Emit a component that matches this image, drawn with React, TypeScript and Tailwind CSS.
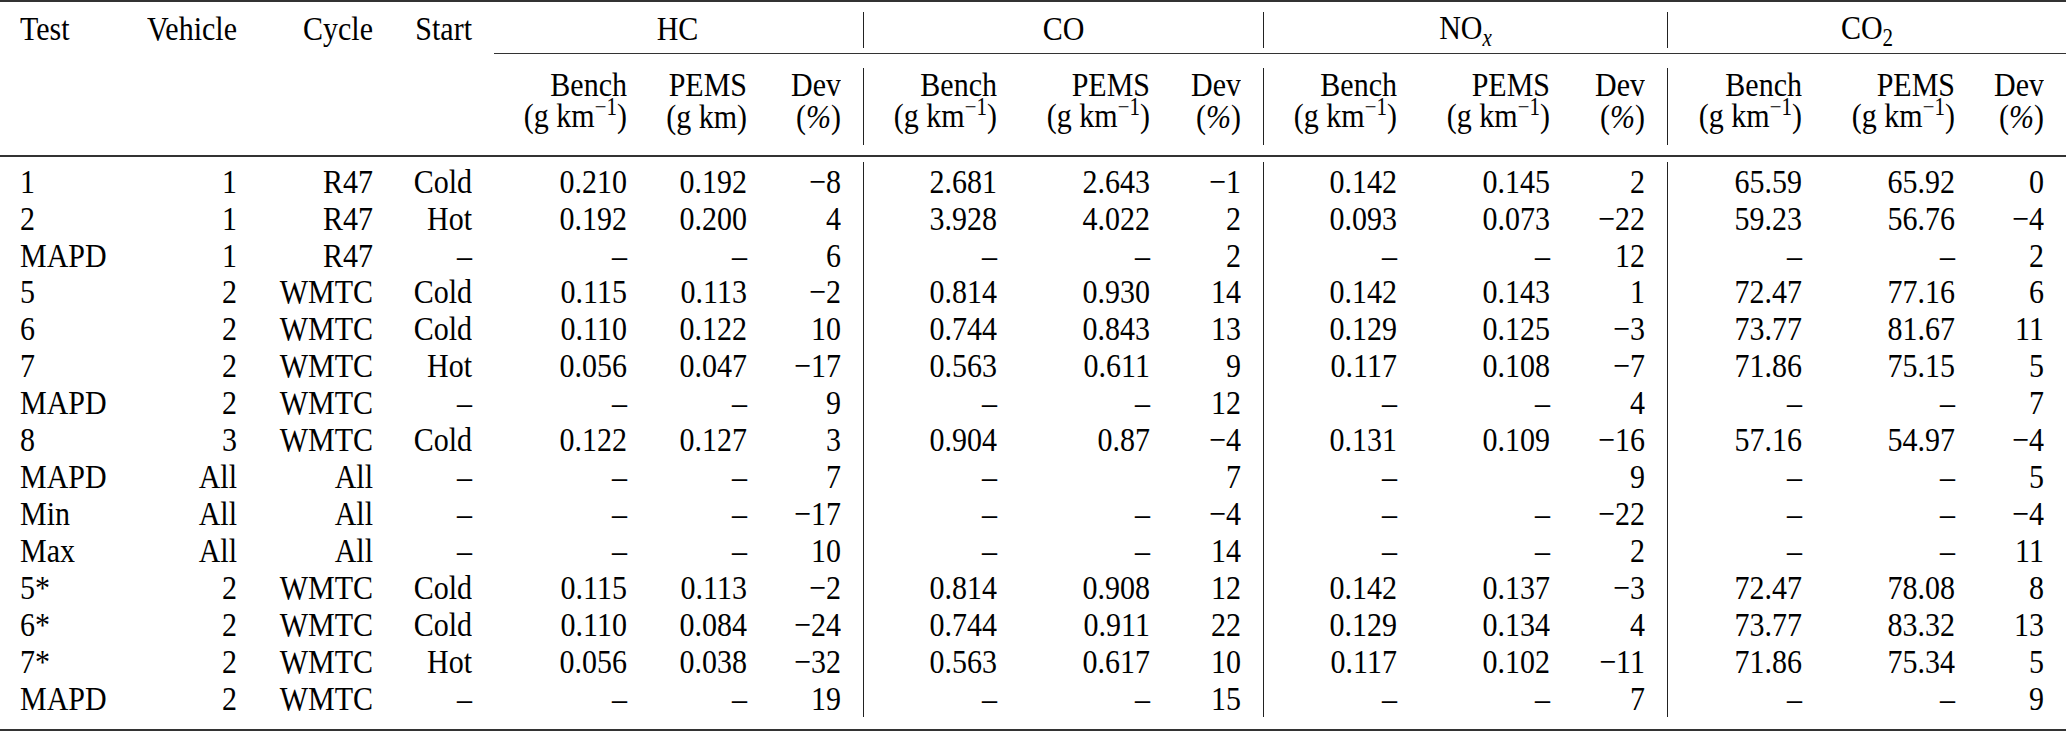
import React from "react";

const COLS =
  "grid grid-cols-[100px_157px_136px_99px_155px_120px_96px_154px_153px_93px_154px_153px_97px_155px_153px_91px]";

const M = "\u2212";
const D = "\u2013";

const rows: string[][] = [
  ["1", "1", "R47", "Cold", "0.210", "0.192", M + "8", "2.681", "2.643", M + "1", "0.142", "0.145", "2", "65.59", "65.92", "0"],
  ["2", "1", "R47", "Hot", "0.192", "0.200", "4", "3.928", "4.022", "2", "0.093", "0.073", M + "22", "59.23", "56.76", M + "4"],
  ["MAPD", "1", "R47", D, D, D, "6", D, D, "2", D, D, "12", D, D, "2"],
  ["5", "2", "WMTC", "Cold", "0.115", "0.113", M + "2", "0.814", "0.930", "14", "0.142", "0.143", "1", "72.47", "77.16", "6"],
  ["6", "2", "WMTC", "Cold", "0.110", "0.122", "10", "0.744", "0.843", "13", "0.129", "0.125", M + "3", "73.77", "81.67", "11"],
  ["7", "2", "WMTC", "Hot", "0.056", "0.047", M + "17", "0.563", "0.611", "9", "0.117", "0.108", M + "7", "71.86", "75.15", "5"],
  ["MAPD", "2", "WMTC", D, D, D, "9", D, D, "12", D, D, "4", D, D, "7"],
  ["8", "3", "WMTC", "Cold", "0.122", "0.127", "3", "0.904", "0.87", M + "4", "0.131", "0.109", M + "16", "57.16", "54.97", M + "4"],
  ["MAPD", "All", "All", D, D, D, "7", D, "", "7", D, "", "9", D, D, "5"],
  ["Min", "All", "All", D, D, D, M + "17", D, D, M + "4", D, D, M + "22", D, D, M + "4"],
  ["Max", "All", "All", D, D, D, "10", D, D, "14", D, D, "2", D, D, "11"],
  ["5*", "2", "WMTC", "Cold", "0.115", "0.113", M + "2", "0.814", "0.908", "12", "0.142", "0.137", M + "3", "72.47", "78.08", "8"],
  ["6*", "2", "WMTC", "Cold", "0.110", "0.084", M + "24", "0.744", "0.911", "22", "0.129", "0.134", "4", "73.77", "83.32", "13"],
  ["7*", "2", "WMTC", "Hot", "0.056", "0.038", M + "32", "0.563", "0.617", "10", "0.117", "0.102", M + "11", "71.86", "75.34", "5"],
  ["MAPD", "2", "WMTC", D, D, D, "19", D, D, "15", D, D, "7", D, D, "9"],
];

function cellClass(idx: number) {
  const left = idx === 0;
  const dev = idx >= 4 && (idx - 4) % 3 === 2;
  const vline = idx === 7 || idx === 10 || idx === 13;
  return [
    "whitespace-nowrap",
    left ? "pl-[20px] text-left" : "text-right",
    dev ? "pr-[22px]" : left ? "" : "pr-[20px]",
    vline ? "border-l border-[#222]" : "",
  ].join(" ");
}

function T({ children }: { children: React.ReactNode }) {
  return <span className="inline-block scale-y-115 leading-[26px]">{children}</span>;
}

function Unit() {
  return (
    <T>
      (g km
      <span className="relative -top-[11px] text-[21px]">{M}1</span>)
    </T>
  );
}

function Pct() {
  return (
    <T>
      (<span className="italic">%</span>)
    </T>
  );
}

export default function App() {
  const sub: [string, React.ReactNode][] = [];
  for (let g = 0; g < 4; g++) {
    sub.push(["Bench", <Unit key="u" />]);
    sub.push(["PEMS", g === 0 ? <T key="t">(g km)</T> : <Unit key="u2" />]);
    sub.push(["Dev", <Pct key="p" />]);
  }
  return (
    <div className="w-[2067px] h-[733px] bg-white text-black font-['Liberation_Serif',serif] text-[30px]">
      <div className="w-[2066px]">
        <div className="h-[2px] bg-[#333]" />
        {/* group header */}
        <div className="grid grid-cols-[100px_157px_136px_99px_371px_400px_404px_399px] h-[51px] pt-[10px]">
          <div className="pl-[20px] leading-[32px]"><T>Test</T></div>
          <div className="pr-[20px] text-right leading-[32px]"><T>Vehicle</T></div>
          <div className="pr-[20px] text-right leading-[32px]"><T>Cycle</T></div>
          <div className="pr-[20px] text-right leading-[32px]"><T>Start</T></div>
          <div className="text-center leading-[32px] h-[36px]"><T>HC</T></div>
          <div className="text-center leading-[32px] h-[36px] border-l border-[#222]"><T>CO</T></div>
          <div className="text-center leading-[32px] h-[36px] border-l border-[#222]">
            <T>
              NO<span className="relative top-[6px] text-[21px] italic">x</span>
            </T>
          </div>
          <div className="text-center leading-[32px] h-[36px] border-l border-[#222]">
            <T>
              CO<span className="relative top-[6px] text-[21px]">2</span>
            </T>
          </div>
        </div>
        <div className="ml-[494px] h-[1px] bg-[#333]" />
        {/* sub header */}
        <div className={COLS + " pt-[14px] pb-[10px]"}>
          <div />
          <div />
          <div />
          <div />
          {sub.map(([a, b], i) => (
            <div key={i} className={cellClass(i + 4) + " h-[77px] leading-[32px]"}>
              <div><T>{a}</T></div>
              <div>{b}</div>
            </div>
          ))}
        </div>
        <div className="h-[1.5px] bg-[#333]" />
        <div className="pt-[5px] pb-[12.5px]">
          {rows.map((r, ri) => (
            <div key={ri} className={COLS + " h-[37px] leading-[37px]"}>
              {r.map((c, ci) => (
                <div key={ci} className={cellClass(ci)}>
                  <T>{c}</T>
                </div>
              ))}
            </div>
          ))}
        </div>
        <div className="h-[2px] bg-[#333]" />
      </div>
    </div>
  );
}
